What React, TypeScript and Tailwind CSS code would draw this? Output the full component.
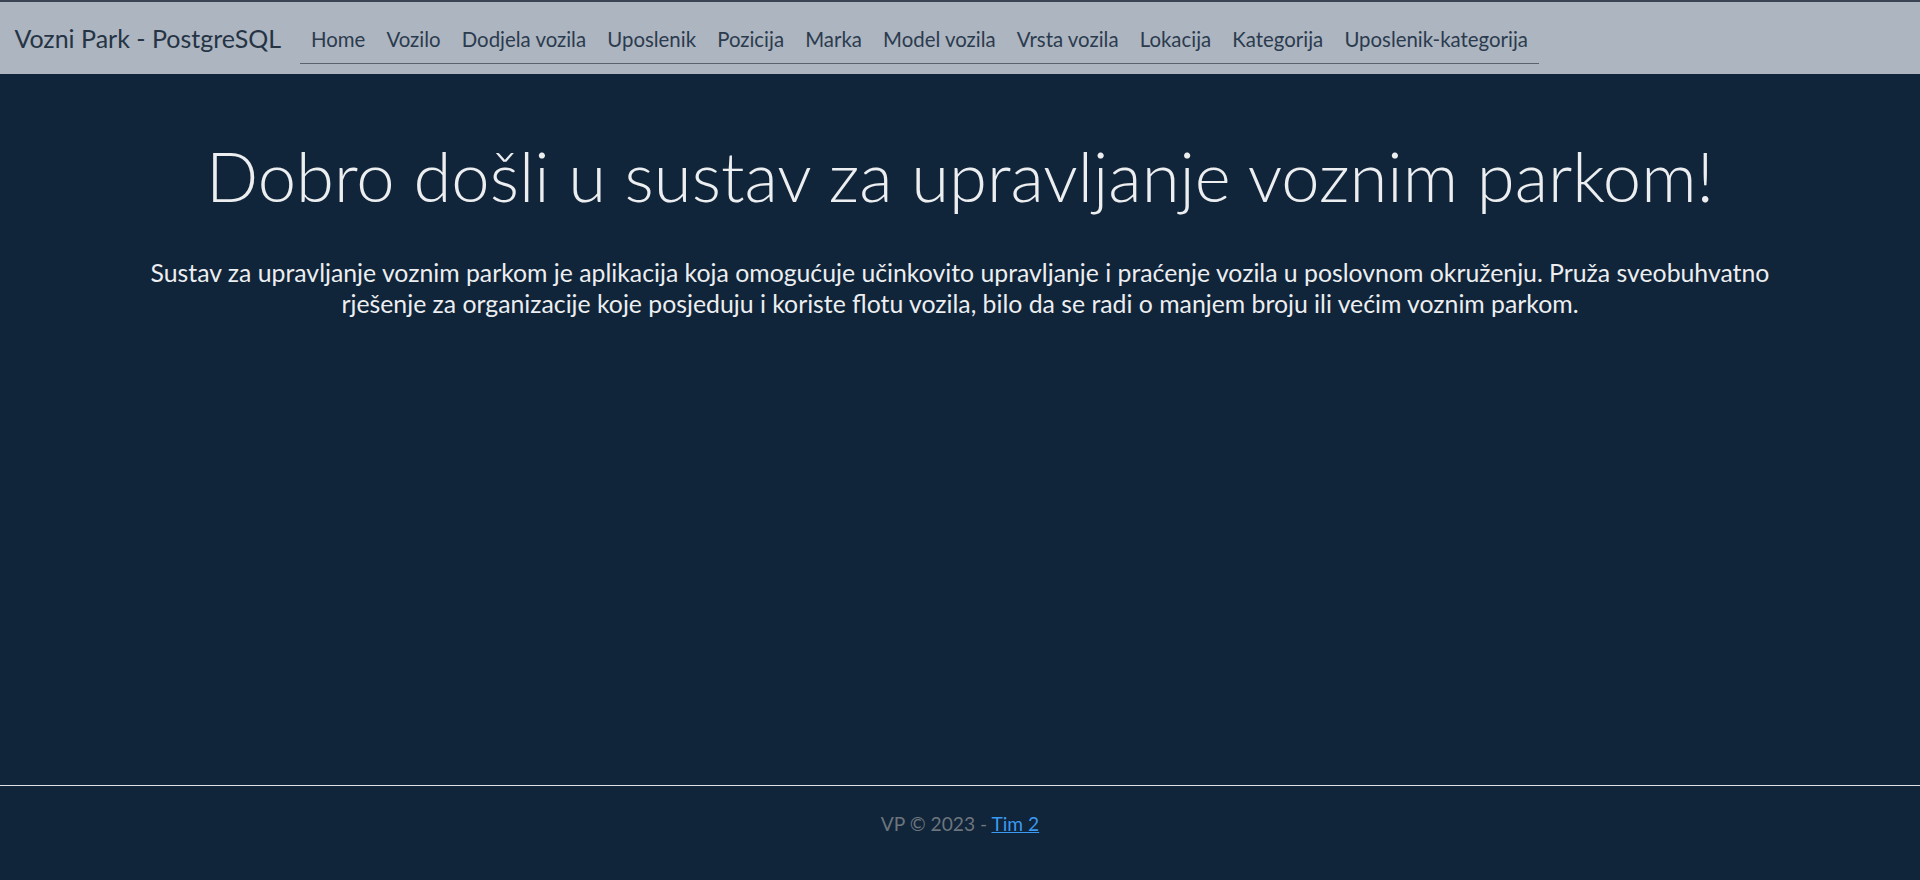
import React from "react";

const links = [
  "Home",
  "Vozilo",
  "Dodjela vozila",
  "Uposlenik",
  "Pozicija",
  "Marka",
  "Model vozila",
  "Vrsta vozila",
  "Lokacija",
  "Kategorija",
  "Uposlenik-kategorija",
];

export default function App() {
  return (
    <div
      className="flex min-h-screen flex-col bg-[#10243a]"
      style={{ fontFamily: "Lato, 'Noto Sans', sans-serif" }}
    >
      {/* navbar */}
      <header className="border-t-2 border-[#3a4354] bg-[#adb5c0]">
        <nav className="flex h-[72px] items-center px-[14.4px]">
          <a className="mr-[19.2px] py-[6px] text-[25px] leading-[36px] text-[#253445]" href="#">
            Vozni Park - PostgreSQL
          </a>
          <ul className="mt-[3px] flex border-b border-[#59636e]">
            {links.map((l) => (
              <li key={l}>
                <a
                  href="#"
                  className="block px-[10.6px] py-[9.6px] text-[20.4px] leading-[28.8px] text-[#2b3b4e]"
                >
                  {l}
                </a>
              </li>
            ))}
          </ul>
        </nav>
      </header>

      <main className="flex-1 px-[140px] pt-[61px] text-center text-[#eceef0]">
        <h1 className="text-[68.8px] font-light leading-[1.2]">
          Dobro došli u sustav za upravljanje voznim parkom!
        </h1>
        <p className="mx-auto mt-[39px] text-[24.8px] leading-[31px]">
          Sustav za upravljanje voznim parkom je aplikacija koja omogućuje učinkovito upravljanje i
          praćenje vozila u poslovnom okruženju. Pruža sveobuhvatno rješenje za organizacije koje
          posjeduju i koriste flotu vozila, bilo da se radi o manjem broju ili većim voznim parkom.
        </p>
      </main>

      <footer className="h-[95px] border-t border-[#dee2e6] pt-[24px] text-center text-[19.2px] leading-[28.8px] text-[#6c757d]">
        VP © 2023 -{" "}
        <a href="#" className="text-[#3b99f0] underline">
          Tim 2
        </a>
      </footer>
    </div>
  );
}
